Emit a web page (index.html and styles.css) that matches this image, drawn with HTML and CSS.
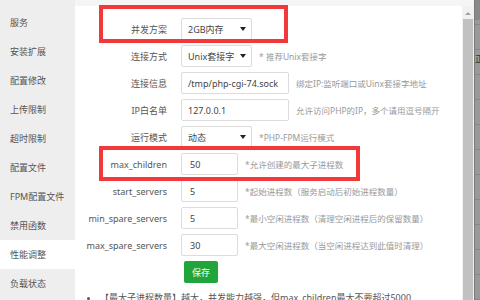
FILE: index.html
```html
<!DOCTYPE html>
<html lang="zh-CN">
<head>
<meta charset="utf-8">
<title>PHP 性能调整</title>
<link rel="stylesheet" href="styles.css">
</head>
<body>
<div class="app">
  <aside class="sidebar">
    <div class="nav-item">服务</div>
    <div class="nav-item">安装扩展</div>
    <div class="nav-item">配置修改</div>
    <div class="nav-item">上传限制</div>
    <div class="nav-item">超时限制</div>
    <div class="nav-item">配置文件</div>
    <div class="nav-item">FPM配置文件</div>
    <div class="nav-item">禁用函数</div>
    <div class="nav-item active">性能调整</div>
    <div class="nav-item">负载状态</div>
  </aside>
  <div class="main">
    <div class="topstrip"></div>
    <div class="body">
      <div class="content">
        <div class="row">
          <label class="label">并发方案</label>
          <div class="select w-select"><span>2GB内存</span><i class="caret"></i></div>
        </div>
        <div class="row">
          <label class="label">连接方式</label>
          <div class="select w-select"><span>Unix套接字</span><i class="caret"></i></div>
          <span class="hint">* 推荐Unix套接字</span>
        </div>
        <div class="row">
          <label class="label">连接信息</label>
          <div class="input w-long">/tmp/php-cgi-74.sock</div>
          <span class="hint">绑定IP:监听端口或Uinx套接字地址</span>
        </div>
        <div class="row">
          <label class="label">IP白名单</label>
          <div class="input w-long">127.0.0.1</div>
          <span class="hint">允许访问PHP的IP，多个请用逗号隔开</span>
        </div>
        <div class="row">
          <label class="label">运行模式</label>
          <div class="select w-select"><span>动态</span><i class="caret"></i></div>
          <span class="hint">*PHP-FPM运行模式</span>
        </div>
        <div class="row">
          <label class="label">max_children</label>
          <div class="input w-short">50</div>
          <span class="hint">*允许创建的最大子进程数</span>
        </div>
        <div class="row">
          <label class="label">start_servers</label>
          <div class="input w-short">5</div>
          <span class="hint">*起始进程数（服务启动后初始进程数量）</span>
        </div>
        <div class="row">
          <label class="label">min_spare_servers</label>
          <div class="input w-short">5</div>
          <span class="hint">*最小空闲进程数（清理空闲进程后的保留数量）</span>
        </div>
        <div class="row">
          <label class="label">max_spare_servers</label>
          <div class="input w-short">30</div>
          <span class="hint">*最大空闲进程数（当空闲进程达到此值时清理）</span>
        </div>
        <div class="actions">
          <button class="btn-save">保存</button>
        </div>
        <ul class="notes">
          <li>【最大子进程数量】越大，并发能力越强，但max_children最大不要超过5000</li>
        </ul>
        <div class="mark mark-1"></div>
        <div class="mark mark-2"></div>
      </div>
      <div class="scrollbar">
        <div class="sb-arrow"></div>
        <div class="sb-thumb"></div>
      </div>
    </div>
  </div>
  <div class="backdrop"><span class="bd-char">正</span></div>
</div>
</body>
</html>
```

FILE: styles.css
```css
* { box-sizing: border-box; }
html, body { margin: 0; padding: 0; }
body {
  width: 480px;
  height: 300px;
  overflow: hidden;
  font-family: "Noto Sans", "Noto Sans CJK SC", sans-serif;
  font-size: 9px;
  color: #555;
  background: #fff;
}
.app {
  display: flex;
  height: 300px;
}
.sidebar {
  width: 75px;
  flex: none;
  background: #eeeeee;
  padding-top: 8px;
}
.nav-item {
  height: 29px;
  line-height: 29px;
  padding-left: 10px;
  color: #555;
  white-space: nowrap;
}
.nav-item.active { background: #fff; }

.main {
  width: 399px;
  flex: none;
  display: flex;
  flex-direction: column;
}
.topstrip {
  height: 6px;
  background: #f5f5f5;
  flex: none;
}
.body {
  flex: 1;
  display: flex;
  min-height: 0;
}
.content {
  position: relative;
  flex: 1;
  padding-top: 12px;
  background: #fff;
}
.row {
  display: flex;
  align-items: center;
  height: 22px;
  margin-bottom: 5px;
}
.label {
  width: 92px;
  flex: none;
  text-align: right;
  color: #555;
  white-space: nowrap;
}
.select, .input {
  margin-left: 14px;
  height: 22px;
  border: 1px solid #dcdcdc;
  border-radius: 2px;
  display: flex;
  align-items: center;
  padding-left: 6px;
  color: #444;
  white-space: nowrap;
  flex: none;
}
.w-select { width: 71px; justify-content: space-between; padding-right: 5px; }
.w-long { width: 108px; }
.w-short { width: 57px; padding-left: 8px; }
.caret {
  width: 0; height: 0;
  border-left: 3px solid transparent;
  border-right: 3px solid transparent;
  border-top: 4px solid #222;
}
.hint {
  margin-left: 7px;
  color: #999;
  font-size: 8.5px;
  white-space: nowrap;
}
.actions {
  padding-left: 109px;
}
.btn-save {
  width: 34px;
  height: 22px;
  border: none;
  border-radius: 2px;
  background: #20a53a;
  color: #fff;
  font-family: inherit;
  font-size: 9px;
  padding: 0;
}
.notes {
  margin: 8px 0 0 0;
  padding-left: 25px;
  color: #555;
  white-space: nowrap;
}
.notes li { line-height: 14px; }

.mark {
  position: absolute;
  border: 4px solid #f2383a;
  pointer-events: none;
}
.mark-1 { left: 24px; top: -1px; width: 189px; height: 38px; }
.mark-2 { left: 24px; top: 140px; width: 261px; height: 35px; }

.scrollbar {
  width: 12px;
  flex: none;
  background: #f1f1f1;
  display: flex;
  flex-direction: column;
  align-items: center;
}
.sb-arrow {
  margin-top: 6px;
  width: 0; height: 0;
  border-left: 3px solid transparent;
  border-right: 3px solid transparent;
  border-bottom: 3px solid #a3a3a3;
}
.sb-thumb {
  margin-top: 4px;
  width: 10px;
  flex: 1;
  background: #c1c1c1;
}
.backdrop {
  flex: 1;
  border-left: 1px solid #7a7a7a;
  background:
    linear-gradient(#888 0 20px, transparent 20px),
    repeating-linear-gradient(#999 0 24px, #868686 24px 25px);
  background-color: #999;
  position: relative;
  overflow: hidden;
}
.bd-char {
  position: absolute;
  left: 0;
  top: 52px;
  font-size: 9px;
  color: #333;
}
```
